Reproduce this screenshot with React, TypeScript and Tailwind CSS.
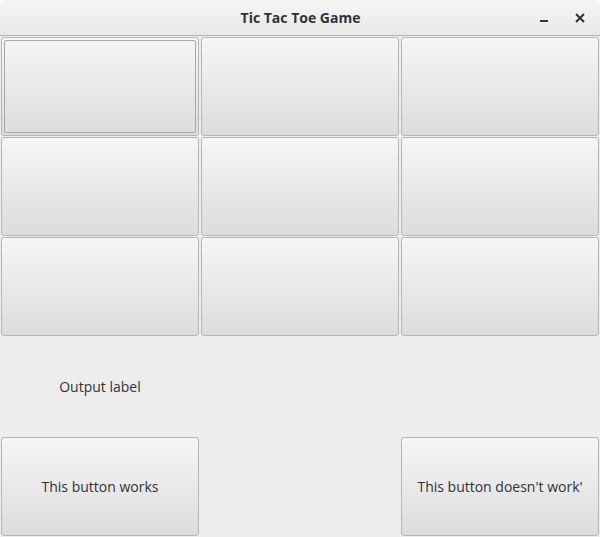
import React from "react";

const btn =
  "mx-px mt-px rounded-[3px] border border-[#b6b6b6] bg-gradient-to-b from-[#f6f6f6] to-[#dcdcdc] flex items-center justify-center text-[14px] text-[#2e3436] relative";

export default function App() {
  const cells = Array.from({ length: 9 });
  return (
    <div
      className="w-[600px] h-[537px] bg-[#ededed] overflow-hidden rounded-t-[6px] flex flex-col"
      style={{ fontFamily: '"Open Sans", "Noto Sans", sans-serif' }}
    >
      <div className="h-[36px] shrink-0 border-b border-[#b4b4b4] bg-gradient-to-b from-[#f5f5f5] to-[#e9e9e9] flex items-center relative">
        <div className="flex-1 text-center text-[14px] font-bold text-[#2e3436] pl-[1px]">
          Tic Tac Toe Game
        </div>
        <div className="absolute right-[13px] top-[11px] flex items-center gap-[22px]">
          <svg width="14" height="14" viewBox="0 0 14 14">
            <rect x="3" y="9" width="8" height="2" fill="#2e3436" />
          </svg>
          <svg width="14" height="14" viewBox="0 0 14 14">
            <path d="M3 3 L11 11 M11 3 L3 11" stroke="#2e3436" strokeWidth="2" />
          </svg>
        </div>
      </div>
      <div className="grid grid-cols-3 grid-rows-[100px_100px_100px_100px_100px]">
        {cells.map((_, i) => (
          <div key={i} className={btn}>
            {i === 0 && (
              <div className="absolute inset-[2px] rounded-[2px] border border-[#a9a9a9]" />
            )}
          </div>
        ))}
        <div className="flex items-center justify-center text-[14px] text-[#2e3436]">
          Output label
        </div>
        <div />
        <div />
        <div className={btn}>This button works</div>
        <div />
        <div className={btn}>This button doesn't work'</div>
      </div>
    </div>
  );
}
